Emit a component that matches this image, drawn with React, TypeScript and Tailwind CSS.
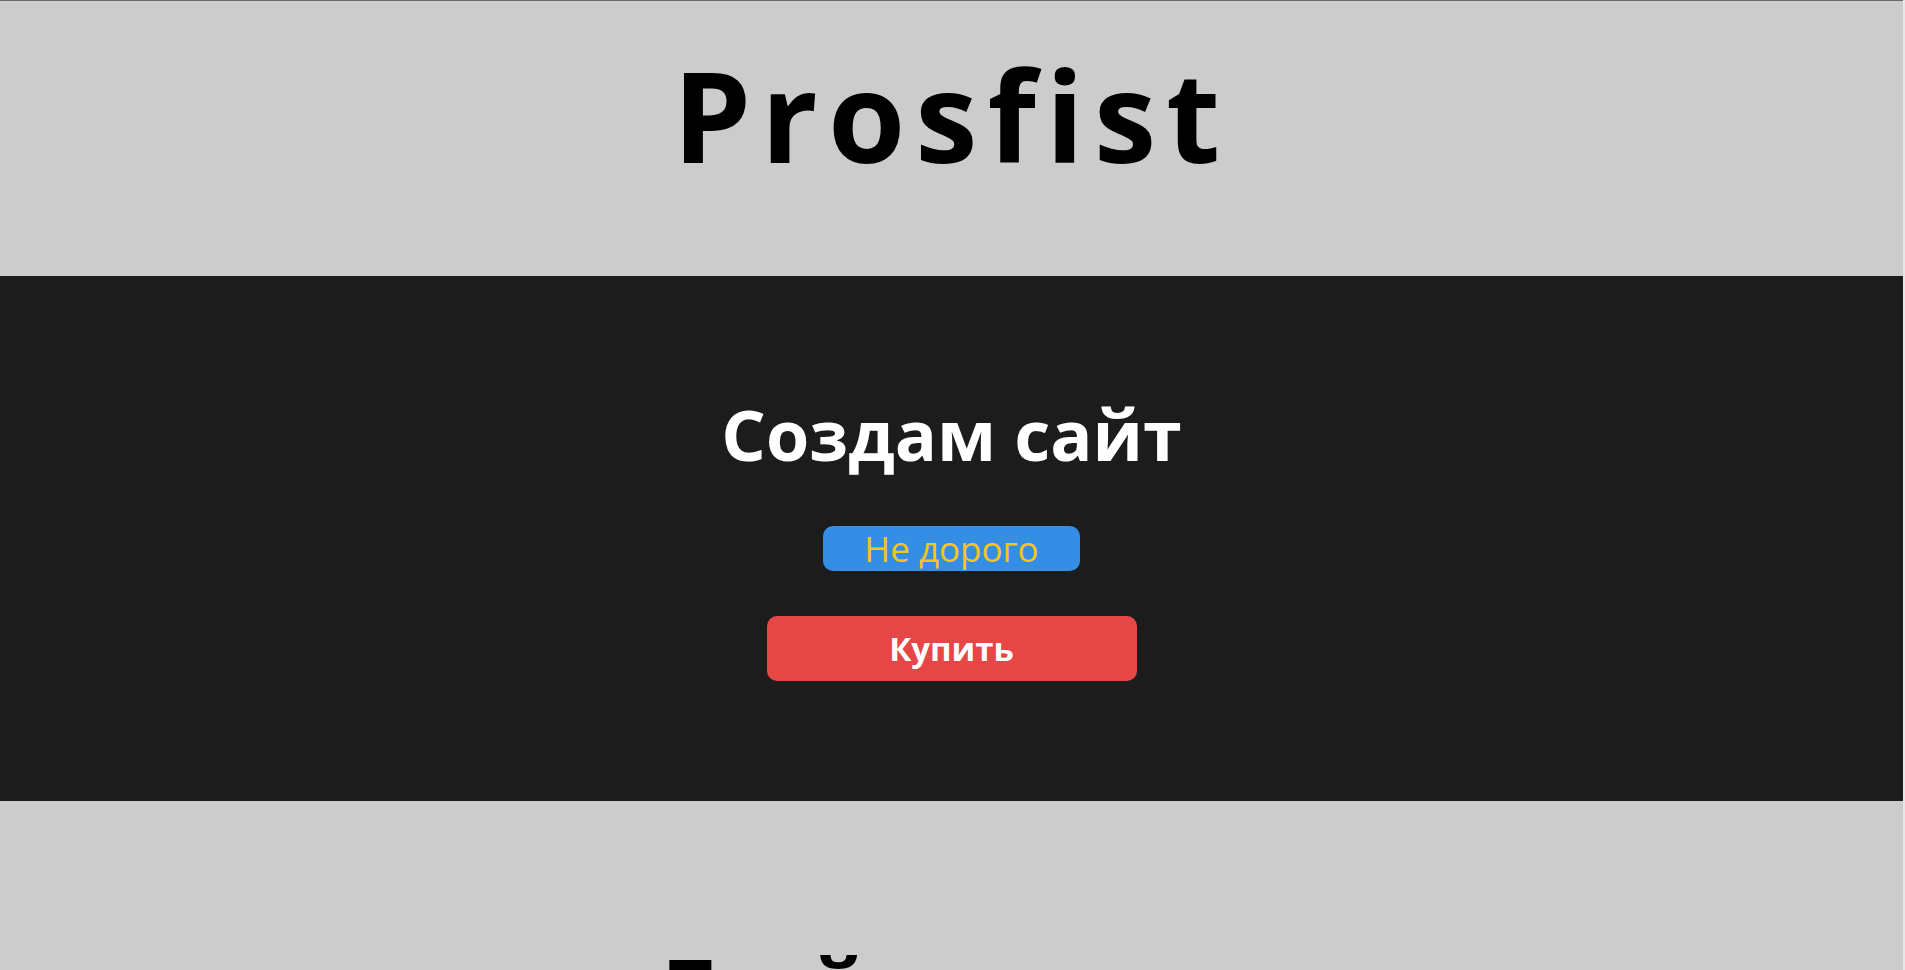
import React from "react";

export default function App() {
  return (
    <div className="w-[1905px] bg-[#e8e8e8]" style={{ fontFamily: '"Open Sans", "Noto Sans", sans-serif' }}>
      <div className="w-[1903px]">
        <header className="h-[276px] bg-[#cccccc] border-t border-[#6b6b6b] pt-[51px] flex justify-center">
          <h1 className="text-[125px] leading-none font-bold tracking-[10px] text-black" style={{ fontFamily: '"Open Sans", sans-serif' }}>
            Prosfist
          </h1>
        </header>
        <section className="h-[525px] bg-[#1c1c1c] flex flex-col items-center pt-[123px]">
          <h2 className="text-[70px] leading-none font-bold text-white">Создам сайт</h2>
          <div className="mt-[57px] w-[257px] h-[45px] rounded-[10px] bg-[#348ee6] flex items-center justify-center">
            <span className="text-[35px] leading-none font-medium text-[#f5c518]">Не дорого</span>
          </div>
          <button className="mt-[45px] w-[370px] h-[65px] rounded-[10px] bg-[#e74646] flex items-center justify-center">
            <span className="text-[33px] leading-none font-bold text-white">Купить</span>
          </button>
        </section>
        <section className="h-[300px] bg-[#cccccc] flex flex-col items-center pt-[147px]">
          <h2 className="text-[78px] leading-none font-bold text-black">Твой магазин</h2>
        </section>
      </div>
    </div>
  );
}
